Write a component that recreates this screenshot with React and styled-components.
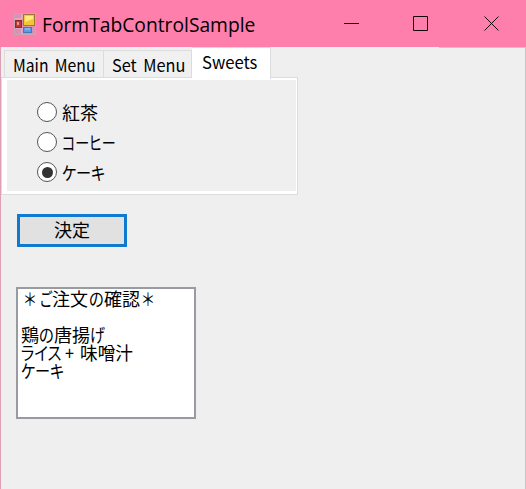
import React, { useState } from "react";
import styled, { createGlobalStyle, css } from "styled-components";

const GlobalStyle = createGlobalStyle`
  *, *::before, *::after { box-sizing: border-box; }
  html, body { margin: 0; padding: 0; overflow: hidden; }
`;

const Window = styled.div`
  width: 526px;
  height: 489px;
  display: flex;
  flex-direction: column;
  background: #efefef;
  color: #000;
  font-family: "Noto Sans CJK JP", sans-serif;
`;

const TitleBar = styled.header`
  position: relative;
  flex: none;
  height: 47px;
  display: flex;
  align-items: center;
  padding-left: 14px;
  background: #ff7fac;
  &::after {
    content: "";
    position: absolute;
    right: 0;
    bottom: -1px;
    width: 87px;
    height: 1px;
    background: #efb4c8;
  }
`;

const Title = styled.h1`
  flex: 1;
  margin: 2px 0 0 6px;
  font: 400 20px/28px "Open Sans", sans-serif;
  transform: scaleX(0.962);
  transform-origin: left center;
`;

const CaptionButton = styled.button`
  width: 70px;
  height: 47px;
  padding: 0 0 0 ${(p) => p.$inset}px;
  border: 0;
  background: transparent;
  display: flex;
  align-items: center;
`;

const Client = styled.main`
  flex: 1;
  border-left: 1px solid #dd9fb8;
  border-right: 1px solid #c4c4c4;
`;

const TabStrip = styled.div`
  display: flex;
  align-items: flex-end;
  height: 30px;
  padding-left: 3px;
`;

const Tab = styled.button`
  position: relative;
  width: ${(p) => p.$width}px;
  height: 27px;
  margin: 0;
  padding: 1px 0 0 8px;
  display: flex;
  align-items: center;
  border: 1px solid #dcdcdc;
  border-width: 1px 1px 0 1px;
  background: #f0f0f0;
  color: #000;
  & + & { border-left: 0; }
  ${(p) =>
    p.$active &&
    css`
      z-index: 1;
      height: 32px;
      margin-bottom: -2px;
      padding: 0 0 3px 10px;
      background: #fff;
    `}
`;

const Label = styled.span`
  flex: none;
  display: inline-block;
  ${(p) => p.$width && css`width: ${p.$width}px;`}
  white-space: pre;
  font-family: "Noto Sans CJK JP", sans-serif;
  font-size: ${(p) => p.$size || 18}px;
  line-height: 18px;
  font-feature-settings: "palt";
  word-spacing: ${(p) => p.$wordGap || 0}px;
  transform: scaleX(${(p) => p.$stretch || 1});
  transform-origin: left center;
`;

const Panel = styled.section`
  width: 297px;
  height: 118px;
  border: 1px solid #dcdcdc;
  background: #efefef;
  box-shadow: inset 5px 0 #fff, inset -1px 0 #fff, inset 0 2px #fff, inset 0 -3px #fff;
  padding: 19px 0 0 35px;
`;

const RadioRow = styled.label`
  display: flex;
  align-items: center;
  gap: 5px;
  height: 30px;
  padding-bottom: 1px;
`;

const RadioMark = styled.span`
  width: 20px;
  height: 20px;
  margin-top: 1px;
  border: 1.5px solid #555;
  border-radius: 50%;
  background: #fff;
  display: grid;
  place-items: center;
  &::after {
    content: "";
    width: 11px;
    height: 11px;
    border-radius: 50%;
    background: ${(p) => (p.$checked ? "#333" : "transparent")};
  }
`;

const HiddenRadio = styled.input`
  appearance: none;
  width: 0;
  height: 0;
  margin: 0 -5px 0 0;
`;

const SubmitButton = styled.button`
  display: flex;
  align-items: center;
  width: 110px;
  height: 33px;
  margin: 19px 0 0 16px;
  padding: 0 0 3px 34px;
  border: 3px solid #1079d0;
  background: #e1e1e1;
  color: #000;
`;

const OrderBox = styled.div`
  width: 180px;
  height: 132px;
  margin: 40px 0 0 15px;
  padding: 0 0 0 3px;
  border: 2px solid #989b9f;
  background: #fff;
`;

const OrderLine = styled.div`
  display: flex;
  height: 18px;
  padding-left: ${(p) => p.$indent || 0}px;
`;

const AppIcon = () => (
  <svg width="22" height="22" viewBox="0 0 22 22">
    <rect x=".5" y=".5" width="21" height="21" fill="#d992b4" stroke="#c9a5b8" />
    <path d="M1 6H8V1M2 15H8M8 15V21M15 12V14" stroke="#eeb8cb" fill="none" />
    <rect x="9.5" y="1.5" width="11" height="11" fill="#f5c62e" stroke="#9c7834" />
    <path d="M11 3h8v3l-8 3z" fill="#ffe980" />
    <rect x="1.5" y="7.5" width="6" height="7" fill="#b93a34" stroke="#8b2930" />
    <rect x="3" y="9" width="2" height="3" fill="#eb9986" />
    <rect x="9.5" y="14.5" width="8" height="5" fill="#5d9be5" stroke="#4776b7" />
    <path d="M11 16h5" stroke="#a5d0fa" />
  </svg>
);

const captionGlyphs = [
  ["Minimize", "M0 7.5H15", 28],
  ["Maximize", "M.5 .5H14.5V14.5H.5Z", 27],
  ["Close", "M.5 .5L14.5 14.5M14.5 .5L.5 14.5", 28],
];

const tabs = [
  { text: "Main Menu", width: 100, stretch: 0.925, wordGap: 3 },
  { text: "Set Menu", width: 88, stretch: 0.96, wordGap: 3 },
  { text: "Sweets", width: 79, stretch: 0.98, wordGap: 0 },
];

const sweets = [
  { text: "紅茶", stretch: 1 },
  { text: "コーヒー", stretch: 0.78 },
  { text: "ケーキ", stretch: 0.84 },
];

// Each part is [text, advance width, horizontal stretch].
const order = [
  {
    indent: 3,
    parts: [
      ["＊", 16, 0.8],
      ["ご", 12, 0.75],
      ["注文", 37, 1],
      ["の", 15, 0.85],
      ["確認", 38, 1],
      ["＊", 14, 0.8],
    ],
  },
  { parts: [] },
  {
    parts: [
      ["鶏", 18, 1],
      ["の", 15, 0.85],
      ["唐揚", 36, 1],
      ["げ", 15, 0.84],
    ],
  },
  {
    parts: [
      ["ライス", 44, 0.86],
      ["+", 15, 0.9],
      ["味噌汁", 54, 0.98],
    ],
  },
  { parts: [["ケーキ", 44, 0.84]] },
];

export default function App() {
  const [tab, setTab] = useState(2);
  const [choice, setChoice] = useState(2);
  return (
    <>
      <GlobalStyle />
      <Window>
        <TitleBar>
          <AppIcon />
          <Title>FormTabControlSample</Title>
          {captionGlyphs.map(([name, d, inset]) => (
            <CaptionButton key={name} aria-label={name} $inset={inset}>
              <svg width="15" height="15" viewBox="0 0 15 15">
                <path d={d} fill="none" stroke="#16060c" />
              </svg>
            </CaptionButton>
          ))}
        </TitleBar>
        <Client>
          <TabStrip>
            {tabs.map((t, i) => (
              <Tab key={t.text} $width={t.width} $active={i === tab} onClick={() => setTab(i)}>
                <Label $size={17} $stretch={t.stretch} $wordGap={t.wordGap}>{t.text}</Label>
              </Tab>
            ))}
          </TabStrip>
          <Panel>
            {sweets.map((s, i) => (
              <RadioRow key={s.text}>
                <HiddenRadio type="radio" name="sweet" checked={i === choice} onChange={() => setChoice(i)} />
                <RadioMark $checked={i === choice} />
                <Label $stretch={s.stretch}>{s.text}</Label>
              </RadioRow>
            ))}
          </Panel>
          <SubmitButton>
            <Label>決定</Label>
          </SubmitButton>
          <OrderBox>
            {order.map((line, i) => (
              <OrderLine key={i} $indent={line.indent}>
                {line.parts.map(([text, width, stretch], j) => (
                  <Label key={j} $width={width} $stretch={stretch}>{text}</Label>
                ))}
              </OrderLine>
            ))}
          </OrderBox>
        </Client>
      </Window>
    </>
  );
}
